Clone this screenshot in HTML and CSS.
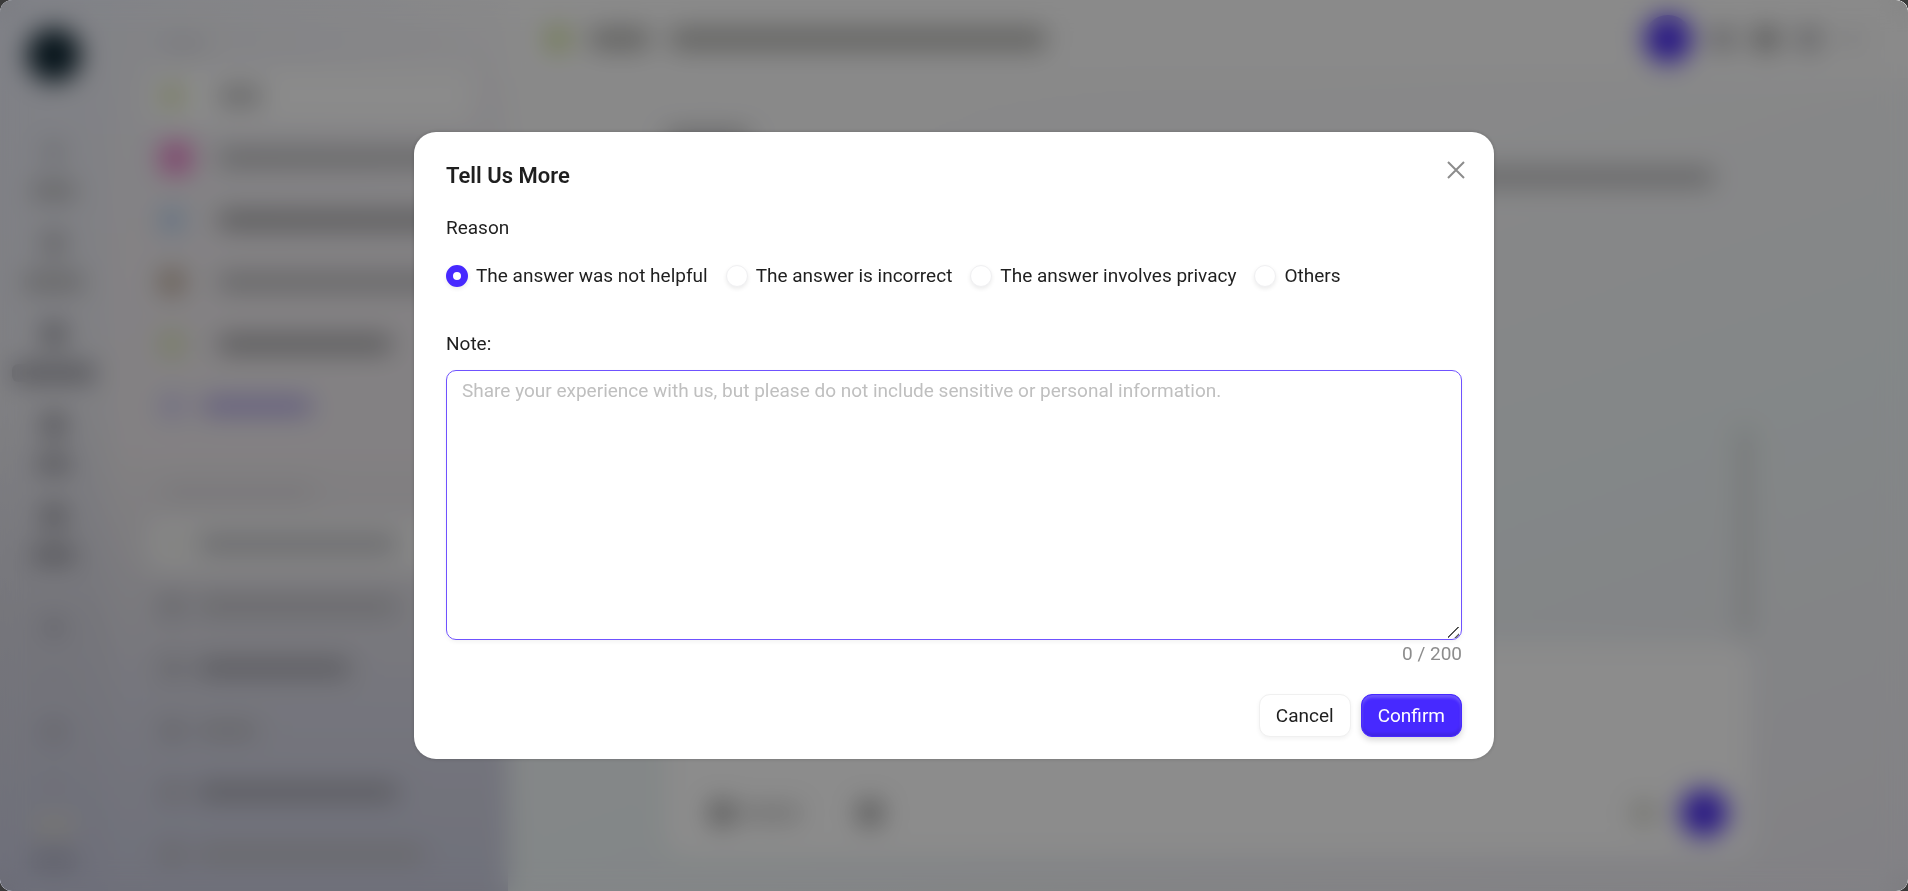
FILE: index.html
```
<!DOCTYPE html>
<html lang="en">
<head>
    <meta charset="UTF-8">
    <meta name="viewport" content="width=device-width, initial-scale=1.0">
    <title>Tell Us More</title>
    <link rel="stylesheet" href="styles.css">
</head>
<body>

<div class="window">
    <!-- app placeholder behind the dialog -->
    <div class="app" aria-hidden="true">
        <div class="rail">
            <div class="logo"></div>
            <div class="rail-item light"><i class="icon"></i><i class="bar w-40"></i></div>
            <div class="rail-item"><i class="icon"></i><i class="bar w-60"></i></div>
            <div class="rail-item strong"><i class="icon"></i><i class="bar w-80"></i></div>
            <div class="rail-item strong"><i class="icon"></i><i class="bar w-30"></i></div>
            <div class="rail-item strong"><i class="icon"></i><i class="bar w-40"></i></div>
            <div class="rail-tools">
                <i class="icon"></i>
                <i class="icon faint"></i>
                <i class="icon"></i>
                <i class="icon faint"></i>
            </div>
            <div class="rail-user"><i class="crown"></i><i class="bar w-40"></i></div>
        </div>

        <div class="list">
            <div class="list-title"><i class="bar w-40"></i></div>
            <div class="row active"><i class="icon green"></i><i class="bar w-40"></i></div>
            <div class="row"><i class="icon pink"></i><i class="bar w-240"></i></div>
            <div class="row dark"><i class="icon blue"></i><i class="bar w-240"></i></div>
            <div class="row"><i class="icon brown"></i><i class="bar w-240"></i></div>
            <div class="row dark"><i class="icon green"></i><i class="bar w-170"></i></div>
            <div class="row add"><i class="icon"></i><i class="bar w-100"></i></div>
            <div class="list-title section"><i class="bar w-140"></i></div>
            <div class="row chat active light"><i class="icon"></i><i class="bar w-190"></i></div>
            <div class="row chat light"><i class="icon"></i><i class="bar w-190"></i></div>
            <div class="row chat"><i class="icon"></i><i class="bar w-140"></i></div>
            <div class="row chat light"><i class="icon"></i><i class="bar w-60"></i></div>
            <div class="row chat"><i class="icon"></i><i class="bar w-190"></i></div>
            <div class="row chat light"><i class="icon"></i><i class="bar w-210"></i></div>
        </div>

        <div class="main">
            <div class="main-head">
                <i class="icon green"></i>
                <i class="bar w-60"></i>
                <i class="bar w-360"></i>
                <div class="actions">
                    <i class="disc"></i>
                    <i class="icon"></i>
                    <i class="icon dark"></i>
                    <i class="icon"></i>
                    <i class="icon faint"></i>
                </div>
            </div>
            <div class="thread">
                <i class="bar w-80"></i>
                <i class="bar full"></i>
                <i class="scroll"></i>
            </div>
            <div class="composer">
                <i class="icon dark"></i>
                <i class="bar w-60"></i>
                <i class="icon dark"></i>
                <i class="icon end"></i>
                <i class="disc"></i>
            </div>
        </div>
    </div>

    <div class="mask">
        <form class="modal" role="dialog" aria-modal="true" aria-labelledby="modalTitle">
            <button type="button" class="close" aria-label="Close">
                <svg width="18" height="18" viewBox="0 0 18 18" fill="none" stroke="currentColor" stroke-width="2">
                    <path d="M1 1L17 17M17 1L1 17"/>
                </svg>
            </button>
            <h2 id="modalTitle">Tell Us More</h2>

            <fieldset>
                <legend>Reason</legend>
                <div class="options">
                    <label><input type="radio" name="reason" value="unhelpful" checked>The answer was not helpful</label>
                    <label><input type="radio" name="reason" value="incorrect">The answer is incorrect</label>
                    <label><input type="radio" name="reason" value="privacy">The answer involves privacy</label>
                    <label><input type="radio" name="reason" value="others">Others</label>
                </div>
            </fieldset>

            <label class="note-label" for="note">Note:</label>
            <textarea id="note" maxlength="200" placeholder="Share your experience with us, but please do not include sensitive or personal information."></textarea>
            <div class="count">0 / 200</div>

            <div class="buttons">
                <button type="button" class="btn">Cancel</button>
                <button type="submit" class="btn primary">Confirm</button>
            </div>
        </form>
    </div>
</div>

</body>
</html>
```

FILE: styles.css
```
* {
    box-sizing: border-box;
}
body {
    margin: 0;
    background-color: #3a3a3a;
    font-family: Roboto, "Liberation Sans", sans-serif;
    font-size: 19px;
    line-height: 30px;
    color: #1f1f1f;
}
button, textarea {
    font: inherit;
    color: inherit;
}
.window {
    position: relative;
    height: 100vh;
    overflow: hidden;
    border-radius: 12px;
}

/* app behind the mask */
.app {
    display: flex;
    height: 100%;
    background: linear-gradient(to right, #e8ebf6 0, #f0f1f6 200px, #f9f9fb 520px);
}
.icon, .bar, .disc, .crown, .scroll {
    display: block;
    flex: none;
}
.icon {
    width: 24px;
    height: 24px;
    border-radius: 6px;
    background-color: #b8b8bc;
}
.icon.faint {
    opacity: 0.2;
}
.icon.dark {
    background-color: #9c9c9c;
}
.icon.green {
    background-color: #dbe4b4;
}
.icon.pink {
    width: 32px;
    height: 32px;
    background-color: #ea80c8;
}
.icon.blue {
    background-color: #b4cff0;
}
.icon.brown {
    background-color: #b8a490;
}
.bar {
    height: 18px;
    border-radius: 6px;
    background-color: #b8b8ba;
}
.w-30 { width: 34px; }
.w-40 { width: 44px; }
.w-60 { width: 60px; }
.w-80 { width: 84px; }
.w-100 { width: 110px; }
.w-140 { width: 152px; }
.w-170 { width: 174px; }
.w-190 { width: 200px; }
.w-210 { width: 226px; }
.w-240 { width: 240px; }
.w-360 { width: 376px; }
.disc {
    width: 48px;
    height: 48px;
    border-radius: 50%;
    background-color: #4a2cf0;
}

.rail {
    display: flex;
    flex-direction: column;
    align-items: center;
    flex: none;
    width: 108px;
    padding: 28px 0 22px;
    background: linear-gradient(to bottom, rgba(230, 232, 242, 0) 0%, #e8e8ee 45%, #d6d6e0 70%, #c8cade 100%);
}
.logo {
    width: 54px;
    height: 54px;
    margin-bottom: 58px;
    border-radius: 50%;
    background-color: #0c2430;
}
.rail-item {
    display: flex;
    flex-direction: column;
    align-items: center;
    gap: 18px;
    height: 91px;
}
.rail-item.light .icon {
    background-color: #cfd0d8;
}
.rail-item.strong .icon,
.rail-item.strong .bar {
    background-color: #9c9ca4;
}
.rail-tools {
    display: flex;
    flex-direction: column;
    gap: 28px;
    margin-top: 20px;
}
.rail-tools .icon {
    background-color: #bcbcc8;
}
.rail-user {
    display: flex;
    flex-direction: column;
    align-items: center;
    gap: 18px;
    margin-top: auto;
}
.rail-user .bar {
    background-color: #acaec0;
}
.crown {
    width: 40px;
    height: 14px;
    background-color: #dcd9cc;
}

.list {
    flex: none;
    width: 400px;
    padding: 31px 38px 0;
    background: linear-gradient(to bottom, rgba(240, 238, 243, 0) 0%, #f0edf1 28%, #efebee 50%, #dedde4 68%, #d2d3e2 85%, #cbcddf 100%);
}
.list-title {
    height: 38px;
    padding: 4px 16px;
}
.list-title .bar {
    opacity: 0.25;
}
.list-title.section {
    height: 46px;
    padding: 12px 16px;
    margin-top: 38px;
}
.row {
    display: flex;
    align-items: center;
    gap: 34px;
    height: 54px;
    margin-bottom: 8px;
    padding: 0 14px;
    border-radius: 12px;
}
.row.active {
    background-color: #fdfdfd;
}
.row.chat.active {
    background-color: #f6f6f6;
}
.row.dark .bar {
    background-color: #a2a2a4;
}
.row .pink {
    margin-right: -8px;
}
.row.add {
    gap: 18px;
}
.row.add .icon {
    background-color: #ccc6ec;
}
.row.add .bar {
    background-color: #b4a9e8;
}
.row.chat {
    gap: 14px;
}
.row.chat .icon {
    background-color: #bcbcc4;
}
.row.chat .bar {
    background-color: #a6a6ae;
}
.row.chat.light .bar {
    background-color: #bebec4;
}
.row.chat.active .icon {
    background-color: #ecece8;
}

.main {
    display: flex;
    flex-direction: column;
    flex: 1;
    min-width: 0;
    background: linear-gradient(160deg, #fafafa 0%, #f8f8f9 25%, #f5f6f8 45%, #eff6f7 62%, #efeff4 85%, #ecebf2 100%);
}
.main-head {
    display: flex;
    align-items: center;
    height: 78px;
    padding: 0 44px 0 38px;
    background-color: #fbfbfb;
}
.main-head .icon.green {
    background-color: #d0e098;
}
.main-head > .bar {
    height: 22px;
    margin-left: 20px;
    background-color: #b4b4b1;
}
.actions {
    display: flex;
    align-items: center;
    gap: 19px;
    margin-left: auto;
}
.thread {
    position: relative;
    flex: 1;
    padding: 52px 194px 0 158px;
}
.thread .full {
    width: auto;
    margin-top: 20px;
}
.scroll {
    position: absolute;
    right: 158px;
    bottom: 8px;
    width: 10px;
    height: 206px;
    background-color: #ccd0d0;
}
.composer {
    display: flex;
    align-items: flex-end;
    gap: 8px;
    height: 212px;
    margin: 0 158px 36px;
    padding: 0 22px 18px 44px;
    border-radius: 20px;
    background-color: #ffffff;
}
.composer .icon {
    margin-bottom: 12px;
}
.composer .bar {
    margin-bottom: 15px;
    background-color: #d4d4d4;
}
.composer .bar + .icon {
    margin-left: 48px;
}
.composer .end {
    margin-left: auto;
    margin-right: 16px;
    background-color: #d4d4cc;
}

/* dialog */
.mask {
    position: absolute;
    inset: 0;
    display: flex;
    align-items: center;
    justify-content: center;
    background-color: rgba(0, 0, 0, 0.45);
    -webkit-backdrop-filter: blur(13px);
    backdrop-filter: blur(13px);
}
.modal {
    position: relative;
    width: 1080px;
    max-width: 94%;
    padding: 29px 32px 22px;
    border-radius: 22px;
    background-color: #ffffff;
    box-shadow: 0 0 4px rgba(0, 0, 0, 0.2);
}
.modal h2 {
    margin: 0 0 22px;
    font-size: 22px;
    line-height: 30px;
    font-weight: 600;
}
.close {
    position: absolute;
    top: 29px;
    right: 29px;
    display: flex;
    padding: 0;
    border: none;
    background: none;
    color: #8c8c8c;
    cursor: pointer;
}
fieldset {
    margin: 0 0 38px;
    padding: 0;
    border: none;
}
legend {
    padding: 0;
    margin-bottom: 18px;
}
.options {
    display: flex;
    flex-wrap: wrap;
    gap: 18px;
}
.options label {
    display: flex;
    align-items: center;
    gap: 8px;
    cursor: pointer;
}
input[type="radio"] {
    appearance: none;
    width: 22px;
    height: 22px;
    margin: 0;
    border: 1px solid #f0f0f2;
    border-radius: 50%;
    background-color: #ffffff;
    box-shadow: 0 2px 4px rgba(0, 0, 0, 0.08);
}
input[type="radio"]:checked {
    border: 7px solid #4729ff;
}
.note-label {
    display: block;
    margin-bottom: 11px;
}
textarea {
    display: block;
    width: 100%;
    height: 270px;
    padding: 6px 15px;
    border: 1px solid #6f52ff;
    border-radius: 10px;
    line-height: 28px;
    outline: none;
    resize: vertical;
    box-shadow: 0 2px 4px rgba(0, 0, 0, 0.05);
}
textarea::placeholder {
    color: #bfbfbf;
}
textarea::-webkit-resizer {
    background: linear-gradient(135deg, transparent 43%, #555 44%, #555 52%, transparent 53%, transparent 77%, #555 78%, #555 86%, transparent 87%) 2px 3px / 11px 11px no-repeat;
}
.count {
    line-height: 28px;
    text-align: right;
    color: #8c8c8c;
}
.buttons {
    display: flex;
    justify-content: flex-end;
    gap: 10px;
    margin-top: 26px;
}
.btn {
    height: 43px;
    padding: 0 16px;
    border: 1px solid #f0f0f0;
    border-radius: 11px;
    background-color: #ffffff;
    box-shadow: 0 2px 4px rgba(0, 0, 0, 0.05);
    cursor: pointer;
}
.btn.primary {
    border-color: #4729ff;
    background-color: #4729ff;
    color: #ffffff;
    box-shadow: 0 3px 6px rgba(0, 0, 0, 0.16), inset 0 3px 3px rgba(255, 255, 255, 0.2), inset 0 -3px 3px rgba(0, 0, 0, 0.1);
}
```
